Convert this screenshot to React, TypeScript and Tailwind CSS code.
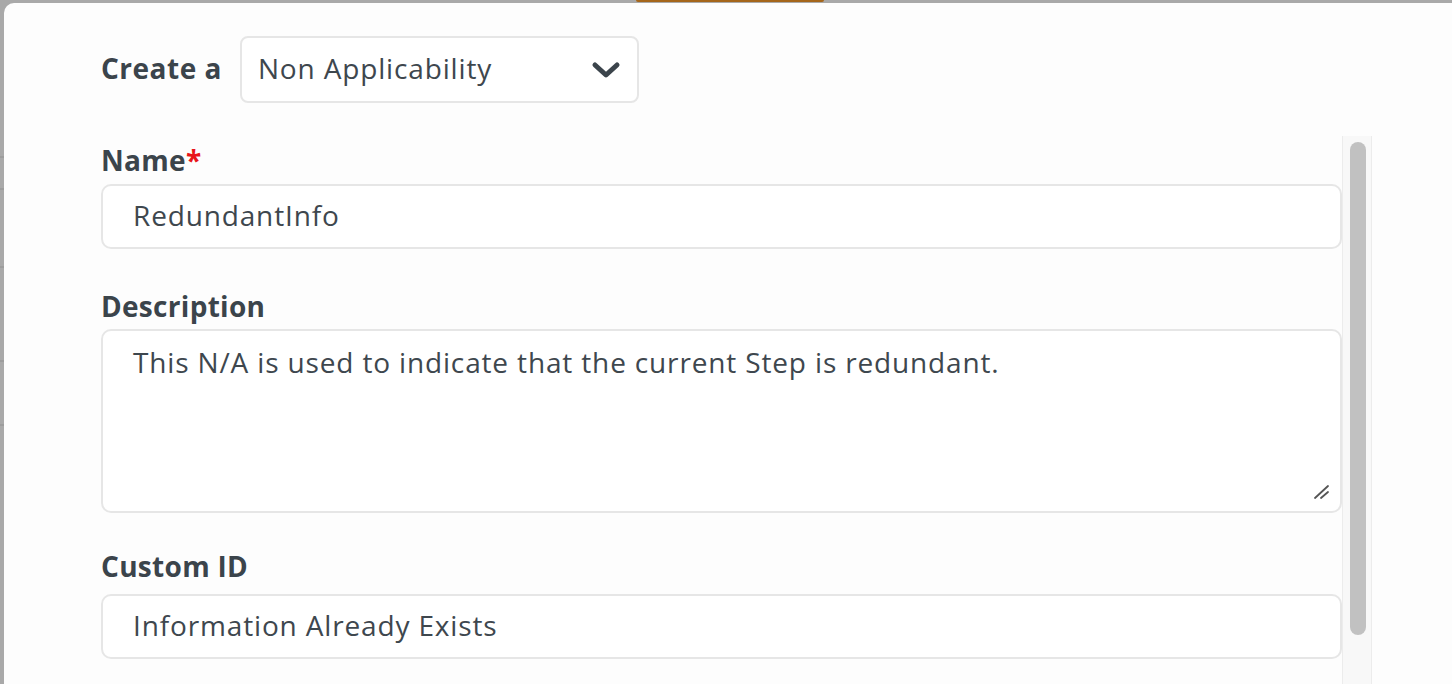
import React from 'react';

const font = { fontFamily: '"Open Sans", Lato, Arial, sans-serif' };

const Label = ({ text, required }: { text: string; required?: boolean }) => (
  <div className="text-[28px] leading-[34px] font-bold tracking-[0.3px] text-[#3b444b]">
    {text}
    {required && <span className="text-[#e8141a]">*</span>}
  </div>
);

const Field = ({ value, className }: { value: string; className?: string }) => (
  <div
    className={`h-[65px] flex items-center pl-[30px] pb-[3px] border-2 border-[#e6e6e6] rounded-[10px] bg-white text-[28px] tracking-[0.85px] text-[#3e474e] ${className ?? ''}`}
  >
    {value}
  </div>
);

export default function App() {
  return (
    <div className="w-[1452px] h-[684px] overflow-hidden bg-[#a9a9a9] flex flex-col" style={font}>
      <div className="h-[3px] shrink-0 flex">
        <div className="ml-[636px] w-[188px] h-[2px] rounded-b-[2px] bg-[#a5661b]" />
      </div>
      <div className="flex flex-1 min-h-0">
        <div className="w-[4px] shrink-0 flex flex-col">
          <div className="mt-[153px] h-[2px] bg-[#9d9d9d]" />
          <div className="mt-[30px] h-[2px] bg-[#9d9d9d]" />
          <div className="mt-[76px] h-[2px] bg-[#9d9d9d]" />
          <div className="mt-[92px] h-[2px] bg-[#9d9d9d]" />
          <div className="mt-[62px] h-[2px] bg-[#9d9d9d]" />
        </div>
        <div className="flex-1 bg-[#fdfdfd] rounded-tl-[10px] flex flex-col">
          <div className="flex items-center pl-[97px] pt-[33px]">
            <div className="text-[28px] font-bold tracking-[0.5px] text-[#3b444b] mr-[18px] mb-[4px]">Create a</div>
            <div className="w-[399px] h-[67px] border-2 border-[#e6e6e6] rounded-[8px] bg-white flex items-center justify-between pl-[16px] pr-[16px] text-[28px] tracking-[0.85px] text-[#3e474e]">
              <span className="mb-[4px]">Non Applicability</span>
              <svg width="30" height="20" viewBox="0 0 30 20" fill="none">
                <path d="M4 5 L15 15 L26 5" stroke="#3b444b" strokeWidth="5" strokeLinecap="round" strokeLinejoin="round" />
              </svg>
            </div>
          </div>
          <div className="flex mt-[33px] flex-1 min-h-0">
            <div className="ml-[97px] w-[1241px] pt-[7px] flex flex-col">
              <Label text="Name" required />
              <Field value="RedundantInfo" className="mt-[7px]" />
              <div className="mt-[40px]">
                <Label text="Description" />
              </div>
              <div className="relative mt-[6px] h-[184px] border-2 border-[#e6e6e6] rounded-[10px] bg-white pl-[30px] pt-[14px] text-[28px] leading-[34px] tracking-[0.85px] text-[#3e474e]">
                This N/A is used to indicate that the current Step is redundant.
                <svg className="absolute right-[10px] bottom-[12px]" width="16" height="14" viewBox="0 0 16 14">
                  <path d="M1 13 L14 1 M7 13 L14 7" stroke="#555" strokeWidth="1.8" strokeLinecap="round" />
                </svg>
              </div>
              <div className="mt-[36px]">
                <Label text="Custom ID" />
              </div>
              <Field value="Information Already Exists" className="mt-[11px]" />
            </div>
            <div className="w-[30px] shrink-0 bg-[#f8f8f8] border-x border-[#ececec] pt-[6px] pl-[7px]">
              <div className="w-[16px] h-[493px] rounded-full bg-[#c1c1c1]" />
            </div>
          </div>
        </div>
      </div>
    </div>
  );
}
